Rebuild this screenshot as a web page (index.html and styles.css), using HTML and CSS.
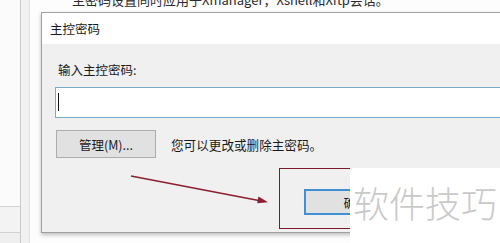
FILE: index.html
```html
<!DOCTYPE html>
<html lang="zh">
<head>
<meta charset="utf-8">
<link rel="stylesheet" href="styles.css">
</head>
<body>
<div class="screen">
  <div class="bg">
    <div class="pane-left">
      <div class="pl-top"></div>
      <div class="pl-row"></div>
      <div class="pl-row2"></div>
    </div>
    <div class="pane-strip"></div>
    <div class="pane-main">
      <p class="hint">主密码设置同时应用于Xmanager，Xshell和Xftp会话。</p>
    </div>
  </div>

  <div class="dialog">
    <div class="titlebar">主控密码</div>
    <div class="dbody">
      <div class="label">输入主控密码:</div>
      <div class="input"><span class="caret"></span></div>
      <div class="row">
        <button class="btn btn-manage">管理(M)...</button>
        <span class="desc">您可以更改或删除主密码。</span>
      </div>
      <div class="footer">
        <button class="btn btn-ok">确定</button>
      </div>
    </div>
  </div>

  <div class="highlight"></div>
  <svg class="arrow" width="500" height="243" viewBox="0 0 500 243">
    <line x1="131" y1="176" x2="264" y2="201.5" stroke="#8a1f2f" stroke-width="1.6"/>
    <polygon points="268,202.3 258.5,196.6 257.2,203.3" fill="#8a1f2f"/>
  </svg>
  <div class="watermark">软件技巧</div>
</div>
</body>
</html>
```
FILE: styles.css
```css
* { box-sizing: border-box; }
html, body { margin: 0; padding: 0; }
body {
  width: 500px;
  height: 243px;
  overflow: hidden;
  background: #fff;
  font-family: "Noto Sans CJK SC", "Liberation Sans", sans-serif;
}
.screen {
  position: relative;
  width: 500px;
  height: 243px;
  overflow: hidden;
}
.bg {
  display: flex;
  height: 243px;
}
.pane-left {
  width: 21px;
  border-right: 1px solid #c9c9c9;
  background: #fbfbfb;
  display: flex;
  flex-direction: column;
}
.pl-top { height: 206px; }
.pl-row {
  height: 26px;
  border-top: 1px solid #d2d2d2;
  background: #f3f3f3;
}
.pl-row2 {
  flex: 1;
  border-top: 1px solid #d2d2d2;
  background: #efefef;
}
.pane-strip {
  width: 9px;
  background: #f1f1f1;
  border-right: 1px solid #e2e2e2;
}
.pane-main {
  flex: 1;
  background: #fdfdfd;
}
.hint {
  margin: -9px 0 0 42px;
  font-size: 13px;
  line-height: 18px;
  color: #2b2b2b;
  white-space: nowrap;
}
.dialog {
  position: absolute;
  left: 41px;
  top: 12px;
  width: 480px;
  height: 221px;
  border: 1px solid #a0a0a0;
  background: #f0f0f0;
  box-shadow: 0 2px 4px rgba(0,0,0,0.25);
  display: flex;
  flex-direction: column;
}
.titlebar {
  height: 31px;
  background: #fff;
  padding-left: 8px;
  font-size: 12.5px;
  line-height: 31px;
  color: #1a1a1a;
}
.dbody {
  flex: 1;
  padding: 18px 0 0 13px;
  display: flex;
  flex-direction: column;
}
.label {
  font-size: 12.5px;
  line-height: 16px;
  padding-left: 3px;
  color: #1a1a1a;
}
.input {
  margin-top: 9px;
  height: 31px;
  background: #fff;
  border: 1px solid #79abc9;
  border-right: none;
  padding: 5px 0 0 2px;
}
.caret {
  display: block;
  width: 1px;
  height: 18px;
  background: #111;
}
.row {
  margin-top: 12px;
  display: flex;
  align-items: center;
}
.btn {
  font-family: "Noto Sans CJK SC", "Liberation Sans", sans-serif;
  font-size: 12.5px;
  color: #1a1a1a;
  background: #e1e1e1;
  border: 1px solid #adadad;
  padding: 0;
  margin: 0;
}
.btn-manage {
  margin-left: 1px;
  width: 100px;
  height: 28px;
}
.desc {
  margin-left: 15px;
  font-size: 12.6px;
  color: #1a1a1a;
}
.footer {
  margin-top: 31px;
  display: flex;
}
.btn-ok {
  margin-left: 249px;
  width: 104px;
  height: 26px;
  border: 2px solid #3f8fd2;
}
.highlight {
  position: absolute;
  left: 279px;
  top: 168px;
  width: 139px;
  height: 61px;
  border: 1.5px solid #7c1a2b;
}
.arrow {
  position: absolute;
  left: 0;
  top: 0;
}
.watermark {
  position: absolute;
  left: 350px;
  top: 168px;
  width: 150px;
  height: 75px;
  background: #fff;
  color: #c9c9c9;
  font-size: 36px;
  line-height: 36px;
  padding: 16px 0 0 3px;
  white-space: nowrap;
  font-weight: 300;
}
```
